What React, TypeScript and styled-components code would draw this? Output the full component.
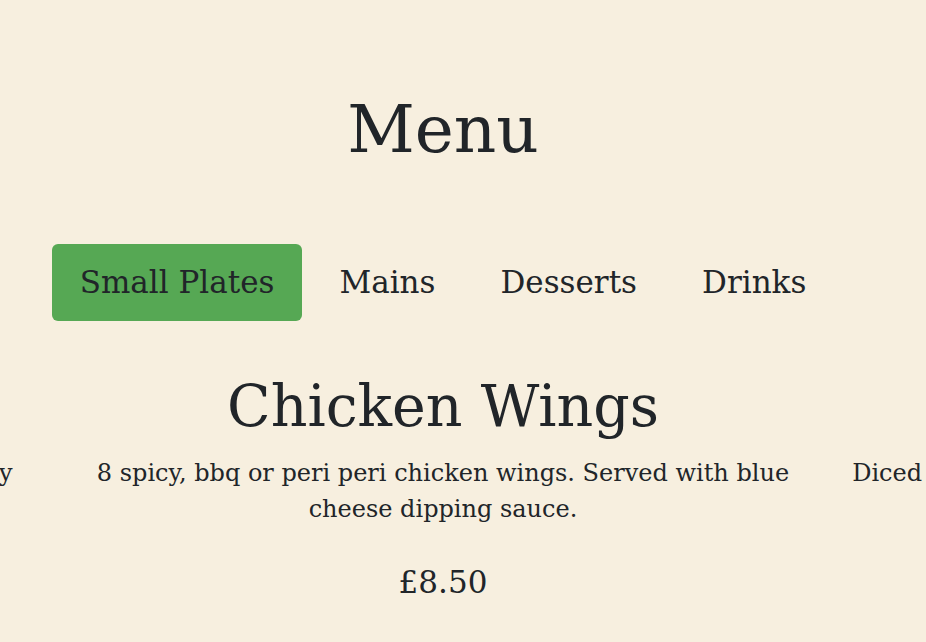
import { useState } from "react";
import styled, { createGlobalStyle } from "styled-components";

const GlobalStyle = createGlobalStyle`
  html, body {
    margin: 0;
    padding: 0;
    background-color: #f7efdf;
  }
  body {
    font-family: "DejaVu Serif", "Liberation Serif", serif;
    color: #212529;
    overflow-x: hidden;
  }
`;

type Dish = {
  id: number;
  name: string;
  description: string;
  price: number;
};

// 임시데이터
const categories = ["Small Plates", "Mains", "Desserts", "Drinks"];

const smallPlates: Dish[] = [
  {
    id: 1,
    name: "Halloumi Fries",
    description:
      "Halloumi fries in a light panko crumb, fried until crispy with a sweet chilli dip.",
    price: 6.5,
  },
  {
    id: 2,
    name: "Chicken Wings",
    description:
      "8 spicy, bbq or peri peri chicken wings. Served with blue cheese dipping sauce.",
    price: 8.5,
  },
  {
    id: 3,
    name: "Chorizo",
    description:
      "Diced chorizo pan fried in red wine and honey, served with warm crusty bread.",
    price: 7.0,
  },
];

const SLIDE_WIDTH = 720;
const SLIDE_GAP = 48;
const CENTER = 443;

export default function App() {
  const [active, setActive] = useState(0);
  const [slide] = useState(1);
  const offset = CENTER - (slide * (SLIDE_WIDTH + SLIDE_GAP) + SLIDE_WIDTH / 2);

  return (
    <>
      <GlobalStyle />
      <Page>
        <Title>Menu</Title>
        <Tabs>
          {categories.map((name, i) => (
            <Tab key={name} $active={i === active} onClick={() => setActive(i)}>
              {name}
            </Tab>
          ))}
        </Tabs>
      </Page>
      <Carousel>
        <Track $offset={offset}>
          {smallPlates.map((dish) => (
            <Slide key={dish.id}>
              <DishName>{dish.name}</DishName>
              <DishText>{dish.description}</DishText>
              <DishPrice>£{dish.price.toFixed(2)}</DishPrice>
            </Slide>
          ))}
        </Track>
      </Carousel>
    </>
  );
}

const Page = styled.div`
  width: 886px;
  display: flex;
  flex-direction: column;
  align-items: center;
  padding-top: 90px;
`;

const Title = styled.h1`
  margin: 0;
  font-size: 66px;
  font-weight: 400;
  line-height: 1.2;
`;

const Tabs = styled.nav`
  display: flex;
  gap: 9px;
  margin-top: 75px;
`;

const Tab = styled.button<{ $active: boolean }>`
  font-family: inherit;
  font-size: 31px;
  line-height: 1.5;
  color: #212529;
  padding: 15px 28px;
  border: none;
  border-radius: 6px;
  cursor: pointer;
  background-color: ${({ $active }) => ($active ? "#56a854" : "transparent")};
`;

const Carousel = styled.section`
  width: 926px;
  overflow: hidden;
  margin-top: 51px;
`;

const Track = styled.div<{ $offset: number }>`
  display: flex;
  gap: ${SLIDE_GAP}px;
  transform: translateX(${({ $offset }) => $offset}px);
`;

const Slide = styled.article`
  flex: 0 0 ${SLIDE_WIDTH}px;
  display: flex;
  flex-direction: column;
  align-items: center;
  text-align: center;
`;

const DishName = styled.h2`
  margin: 0;
  font-size: 57px;
  font-weight: 400;
  line-height: 1.2;
`;

const DishText = styled.p`
  margin: 15px 0 0;
  font-size: 24px;
  line-height: 36px;
`;

const DishPrice = styled.p`
  margin: 37px 0 0;
  font-size: 31px;
  line-height: 1.2;
`;
